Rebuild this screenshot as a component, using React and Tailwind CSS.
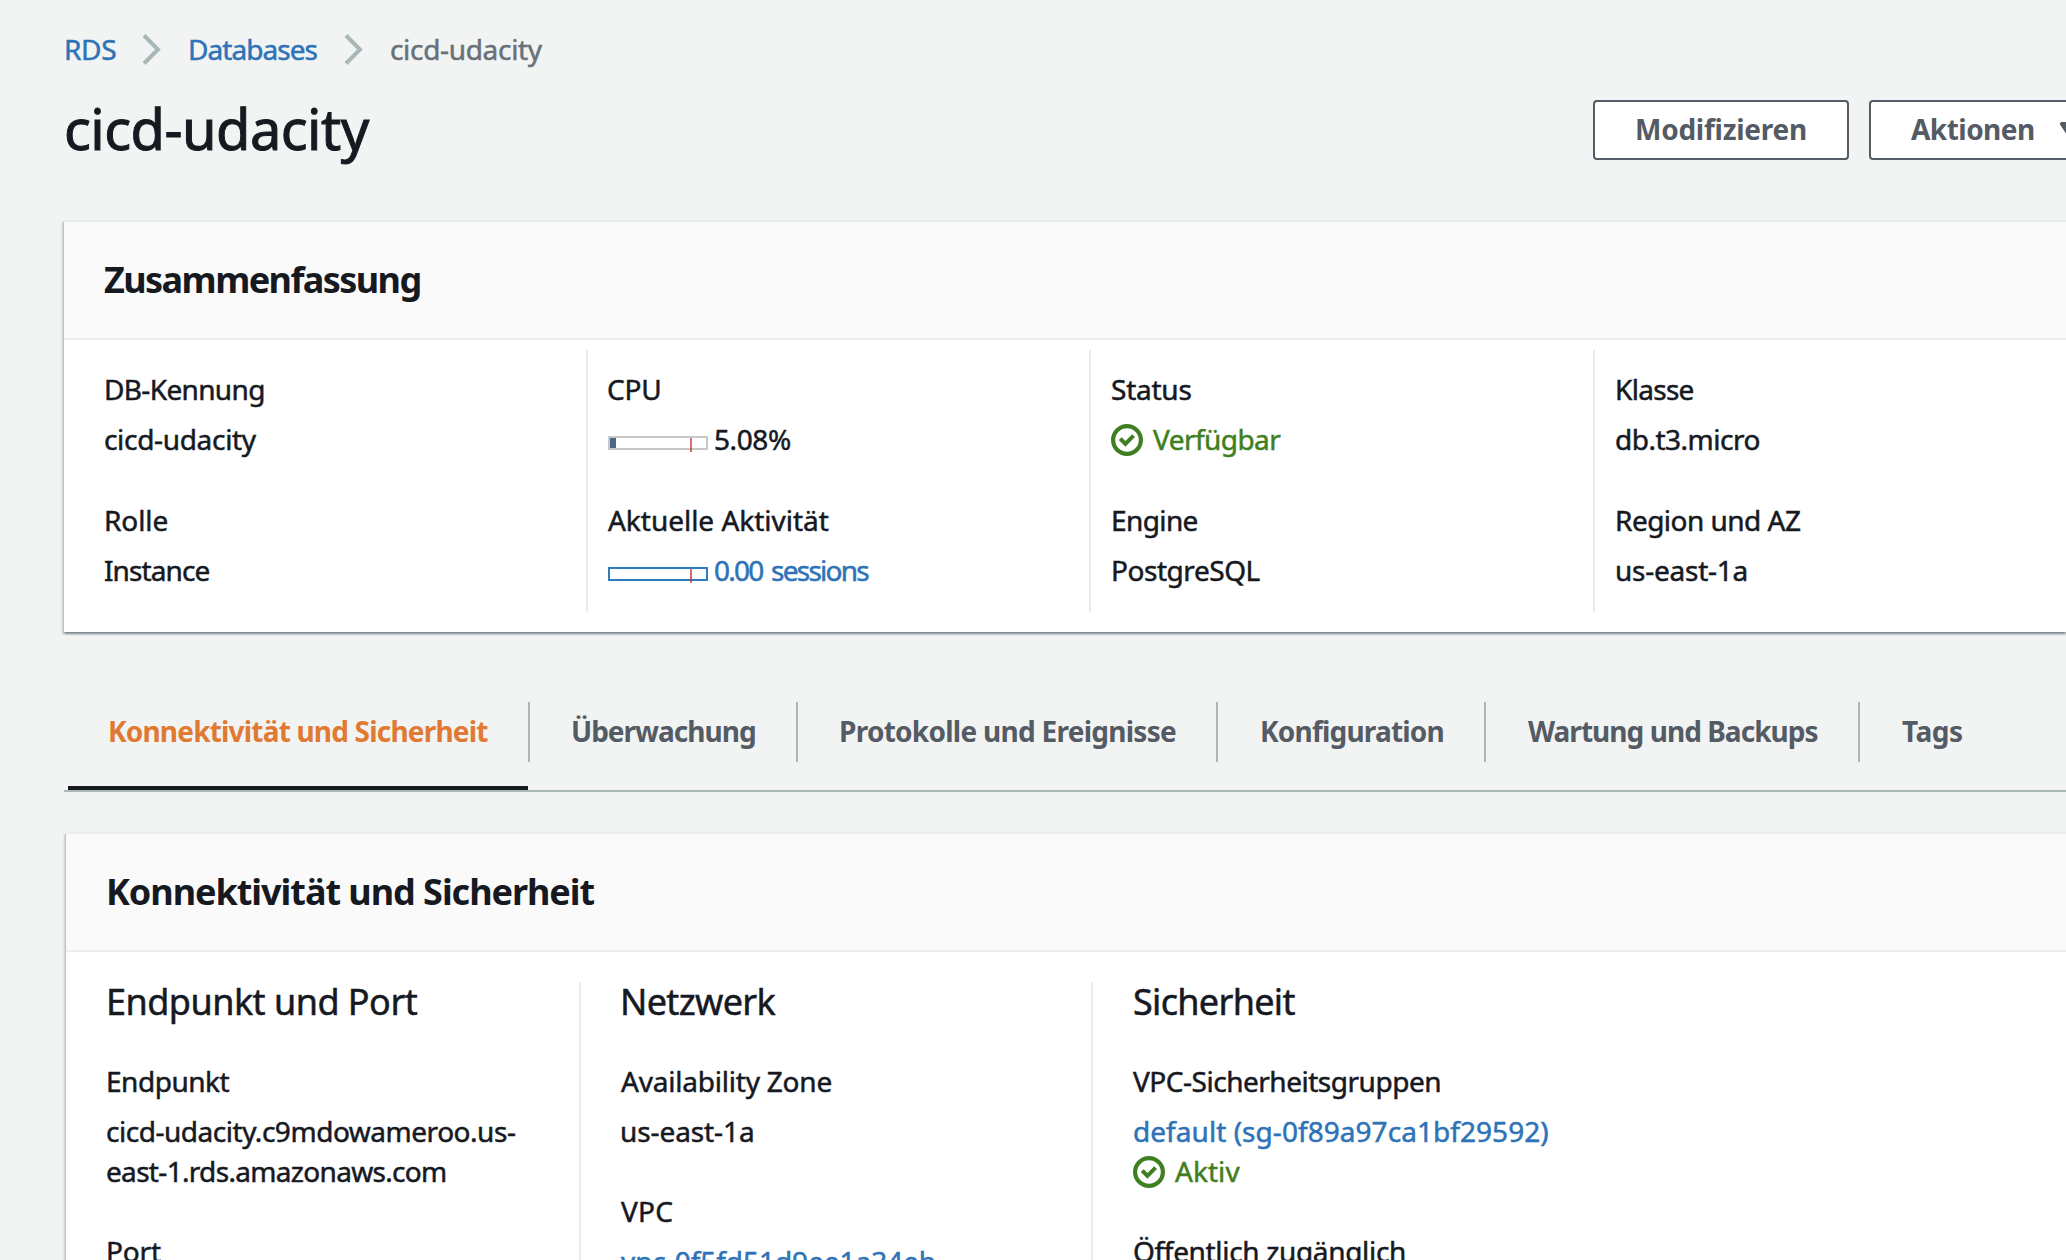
import React from "react";

function Check() {
  return (
    <svg viewBox="0 0 16 16" className="mt-0.5 size-8 shrink-0" fill="none" stroke="currentColor" strokeWidth="2.100">
      <circle cx="8" cy="8" r="6.950" />
      <path d="m5.300 8 1.900 1.900 3.400-3.400" strokeLinecap="square" strokeLinejoin="miter" strokeWidth="2" />
    </svg>
  );
}

function Chevron() {
  return (
    <svg viewBox="0 0 20 32" className="h-8 w-5 shrink-0" fill="none" stroke="#aab7b8" strokeWidth="4">
      <path d="M2 2.500 16 16.500 2 30.500" />
    </svg>
  );
}

function Meter({ tone, value }) {
  return (
    <span className={"relative mt-2 block h-3.5 w-[100px] shrink-0 border-2 " + tone}>
      <span className="block h-full bg-[#4a6785]" style={{ width: value + "%" }} />
      <span className="absolute top-0 left-20 h-3.5 w-0.5 bg-[#c8322b]/70" />
    </span>
  );
}

function Field({ label, labelClass, children, className = "" }) {
  return (
    <div className={"flex flex-col gap-2.5 " + className}>
      <div className={labelClass}>{label}</div>
      <div>{children}</div>
    </div>
  );
}

function Panel({ title, titleClass, className = "", children }) {
  return (
    <section
      className={
        "flex flex-col border-t-2 border-[#eaeded] bg-white shadow-[0_2px_2px_0_rgba(0,28,36,0.3),2px_2px_2px_0_rgba(0,28,36,0.15),-2px_2px_2px_0_rgba(0,28,36,0.15)] " +
        className
      }
    >
      <header className="h-[118px] shrink-0 border-b-2 border-[#eaeded] bg-[#fafafa] pt-9 pl-10">
        <h2 className={"text-[36px] leading-[44px] font-bold [-webkit-text-stroke-width:0px] " + titleClass}>{title}</h2>
      </header>
      {children}
    </section>
  );
}

const tabs = [
  { label: "Konnektivität und Sicherheit", box: "w-[462px] pl-10", text: "tracking-[-0.81px] text-[#e07a33]", active: true },
  { label: "Überwachung", box: "w-[268px] pl-[41px]", text: "tracking-[-1px]" },
  { label: "Protokolle und Ereignisse", box: "w-[420px] pl-[41px]", text: "tracking-[-0.73px]" },
  { label: "Konfiguration", box: "w-[268px] pl-[42px]", text: "tracking-[-0.8px]" },
  { label: "Wartung und Backups", box: "w-[374px] pl-[42px]", text: "tracking-[-0.96px]" },
  { label: "Tags", box: "w-[180px] pl-[42px]", text: "tracking-[-0.5px]", last: true },
];

const link = "text-[#2e73b8]";
const ok = "flex items-center gap-2.5 text-[#3f7f22]";
const column = "flex shrink-0 flex-col gap-[41px] pt-[19px]";
const divider = "border-r-2 border-[#eaeded]";

export default function App() {
  return (
    <main className="flex h-[1260px] w-[2066px] flex-col overflow-hidden bg-[#f2f4f3] pl-16 font-['Noto_Sans','Open_Sans',sans-serif] text-[28px] leading-10 font-normal text-[#16191f] [-webkit-text-stroke-width:0.5px]">
      <nav className="mt-[29px] flex h-10 shrink-0">
        <a className={"w-[78px] tracking-[-0.3px] " + link}>RDS</a>
        <span className="mt-1 w-[46px]"><Chevron /></span>
        <a className={"w-[156px] tracking-[-0.95px] " + link}>Databases</a>
        <span className="mt-1 w-[46px]"><Chevron /></span>
        <span className="tracking-[-0.32px] text-[#687078]">cicd-udacity</span>
      </nav>

      <div className="mt-[27px] flex h-16 w-[2044px] shrink-0 justify-between">
        <h1 className="text-[56px] leading-[64px] tracking-[-0.55px] [-webkit-text-stroke-width:1px]">cicd-udacity</h1>
        <div className="mt-1 flex gap-5 font-bold text-[#545b64] [-webkit-text-stroke-width:0px]">
          <button className="flex h-[60px] w-64 rounded-[4px] border-2 border-[#545b64] bg-white pt-[7px] pl-10 text-left tracking-[-0.25px]">Modifizieren</button>
          <button className="flex h-[60px] w-[239px] rounded-[4px] border-2 border-[#545b64] bg-white pt-[7px] pl-10 text-left tracking-[-0.53px]">
            <span className="w-[143px]">Aktionen</span>
            <svg viewBox="0 0 16 16" className="mt-[5px] size-8" fill="#545b64" stroke="#545b64" strokeWidth="2" strokeLinejoin="round">
              <path d="M4 5h8l-4 6-4-6z" />
            </svg>
          </button>
        </div>
      </div>

      <Panel title="Zusammenfassung" titleClass="tracking-[-1.57px]" className="mt-[60px] h-[412px] shrink-0">
        <div className="mt-2.5 flex h-[262px]">
          <div className={"w-[524px] pl-10 " + column + " " + divider}>
            <Field label="DB-Kennung" labelClass="tracking-[-0.65px]"><span className="tracking-[-0.32px]">cicd-udacity</span></Field>
            <Field label="Rolle" labelClass="tracking-[-0.1px]"><span className="tracking-[-0.9px]">Instance</span></Field>
          </div>
          <div className={"w-[503px] pl-5 " + column + " " + divider}>
            <Field label="CPU" labelClass="-ml-px tracking-[-0.2px]">
              <span className="flex items-center gap-1.5"><Meter tone="border-[#c8c8c8]" value={6.25} /><span className="tracking-[-0.4px]">5.08%</span></span>
            </Field>
            <Field label="Aktuelle Aktivität" labelClass="tracking-[-0.02px]">
              <span className={"flex items-center gap-1.5 " + link}><Meter tone="border-[#2f7cbd]" value={0} /><span className="tracking-[-1.75px] [word-spacing:3px]">0.00 sessions</span></span>
            </Field>
          </div>
          <div className={"w-[504px] pl-5 " + column + " " + divider}>
            <Field label="Status" labelClass="tracking-[-0.24px]">
              <span className={ok}><Check /><span className="tracking-[-0.55px]">Verfügbar</span></span>
            </Field>
            <Field label="Engine" labelClass="tracking-[-0.6px]"><span className="tracking-[-0.45px]">PostgreSQL</span></Field>
          </div>
          <div className={"pl-5 " + column}>
            <Field label="Klasse" labelClass="tracking-[-0.7px]"><span className="tracking-[-0.5px]">db.t3.micro</span></Field>
            <Field label="Region und AZ" labelClass="tracking-[-0.52px]"><span className="tracking-[-0.25px]">us-east-1a</span></Field>
          </div>
        </div>
      </Panel>

      <div className="mt-[70px] flex h-[90px] shrink-0 border-b-2 border-[#aab7b8] pl-1 font-bold text-[#545b64] [-webkit-text-stroke-width:0px]">
        {tabs.map((t) => (
          <div key={t.label} className="flex h-[88px] shrink-0 flex-col">
            <div className={"h-[60px] pt-[9px] " + t.box + (t.last ? "" : " border-r-2 border-[#aab7b8]")}>
              <span className={t.text}>{t.label}</span>
            </div>
            {t.active && <div className="mt-6 mr-0.5 h-1 bg-[#16191f]" />}
          </div>
        ))}
      </div>

      <Panel title="Konnektivität und Sicherheit" titleClass="tracking-[-1.04px]" className="mt-10 ml-0.5 h-[600px] shrink-0">
        <div className="mt-[30px] flex h-[448px]">
          <div className={"w-[515px] shrink-0 pl-10 " + divider}>
            <h3 className="-mt-0.5 text-[36px] leading-[44px] tracking-[-0.52px]">Endpunkt und Port</h3>
            <Field className="mt-[37px]" label="Endpunkt" labelClass="tracking-[-0.48px]">
              <span className="block tracking-[-0.47px]">cicd-udacity.c9mdowameroo.us-</span>
              <span className="block tracking-[-0.68px]">east-1.rds.amazonaws.com</span>
            </Field>
            <Field className="mt-10" label="Port" labelClass="tracking-[-0.15px]">5432</Field>
          </div>
          <div className={"w-[512px] shrink-0 pl-10 " + divider}>
            <h3 className="-mt-0.5 -ml-px text-[36px] leading-[44px] tracking-[-0.65px]">Netzwerk</h3>
            <Field className="mt-[37px]" label="Availability Zone" labelClass="tracking-[-0.21px]"><span className="-ml-px tracking-[-0.09px]">us-east-1a</span></Field>
            <Field className="mt-10" label="VPC" labelClass="tracking-[0.2px]"><span className={"tracking-[-0.05px] " + link}>vpc-0f5fd51d9ee1a34eb</span></Field>
          </div>
          <div className="pl-10">
            <h3 className="-mt-0.5 text-[36px] leading-[44px] tracking-[-0.68px]">Sicherheit</h3>
            <Field className="mt-[37px]" label="VPC-Sicherheitsgruppen" labelClass="tracking-[-0.48px]">
              <a className={"block tracking-[0.05px] " + link}>default (sg-0f89a97ca1bf29592)</a>
              <span className={ok}><Check /><span className="tracking-[0.05px]">Aktiv</span></span>
            </Field>
            <Field className="mt-10" label="Öffentlich zugänglich" labelClass="tracking-[-0.33px]">Ja</Field>
          </div>
        </div>
      </Panel>
    </main>
  );
}
